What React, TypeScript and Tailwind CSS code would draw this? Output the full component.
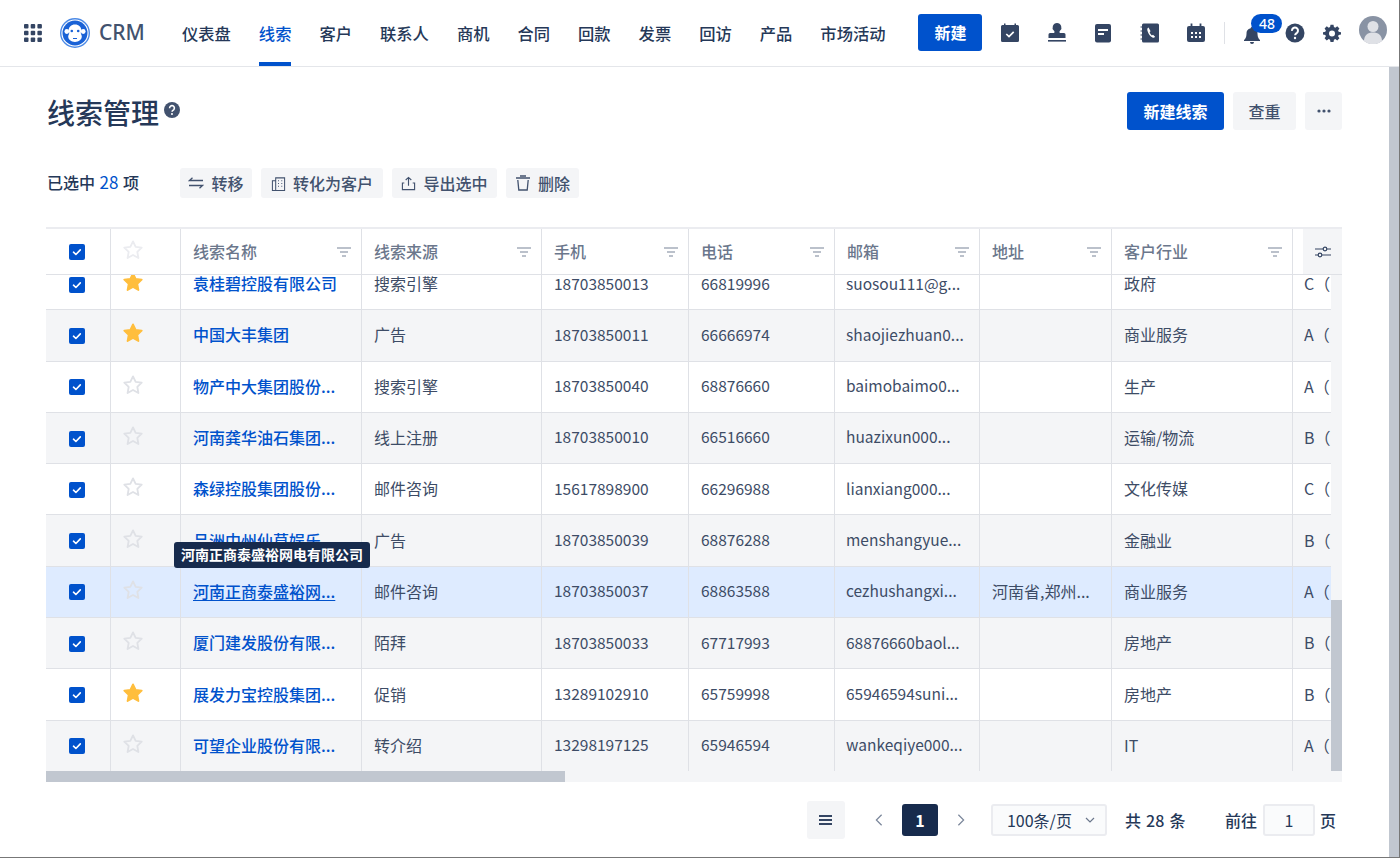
import type { ReactNode } from 'react';

// --- Mock data for the leads table ---
const leads = [
  { name: '袁桂碧控股有限公司', source: '搜索引擎', mobile: '18703850013', phone: '66819996', email: 'suosou111@g...', address: '', industry: '政府', level: 'C（', star: true },
  { name: '中国大丰集团', source: '广告', mobile: '18703850011', phone: '66666974', email: 'shaojiezhuan0...', address: '', industry: '商业服务', level: 'A（', star: true },
  { name: '物产中大集团股份...', source: '搜索引擎', mobile: '18703850040', phone: '68876660', email: 'baimobaimo0...', address: '', industry: '生产', level: 'A（', star: false },
  { name: '河南龚华油石集团...', source: '线上注册', mobile: '18703850010', phone: '66516660', email: 'huazixun000...', address: '', industry: '运输/物流', level: 'B（', star: false },
  { name: '森绿控股集团股份...', source: '邮件咨询', mobile: '15617898900', phone: '66296988', email: 'lianxiang000...', address: '', industry: '文化传媒', level: 'C（', star: false },
  { name: '吕洲中州仙草娱乐...', source: '广告', mobile: '18703850039', phone: '68876288', email: 'menshangyue...', address: '', industry: '金融业', level: 'B（', star: false },
  { name: '河南正商泰盛裕网...', source: '邮件咨询', mobile: '18703850037', phone: '68863588', email: 'cezhushangxi...', address: '河南省,郑州...', industry: '商业服务', level: 'A（', star: false, hovered: true },
  { name: '厦门建发股份有限...', source: '陌拜', mobile: '18703850033', phone: '67717993', email: '68876660baol...', address: '', industry: '房地产', level: 'B（', star: false },
  { name: '展发力宝控股集团...', source: '促销', mobile: '13289102910', phone: '65759998', email: '65946594suni...', address: '', industry: '房地产', level: 'B（', star: true },
  { name: '可望企业股份有限...', source: '转介绍', mobile: '13298197125', phone: '65946594', email: 'wankeqiye000...', address: '', industry: 'IT', level: 'A（', star: false },
];

const navItems = ['仪表盘', '线索', '客户', '联系人', '商机', '合同', '回款', '发票', '回访', '产品', '市场活动'];

const Checkbox = () => (
  <span className="flex h-4 w-4 items-center justify-center rounded-[2px] bg-[#0052cc]">
    <svg viewBox="0 0 16 16" className="h-4 w-4" fill="none" stroke="white" strokeWidth="1.6" strokeLinecap="round" strokeLinejoin="round">
      <path d="M4.5 8.2l2.4 2.3 4.4-4.6" />
    </svg>
  </span>
);

const Star = ({ filled, light }: { filled?: boolean; light?: boolean }) => (
  <svg viewBox="0 0 24 24" className="-mt-1 h-[22px] w-[22px]" fill={filled ? '#ffbe3d' : 'none'} stroke={filled ? '#ffbe3d' : light ? '#ebecf0' : '#dfe1e6'} strokeWidth="2" strokeLinejoin="round">
    <path d="M12 2.6l2.9 6 6.6.9-4.8 4.6 1.2 6.6-5.9-3.2-5.9 3.2 1.2-6.6L2.5 9.500l6.6-.9z" />
  </svg>
);

const FilterIcon = () => (
  <svg viewBox="0 0 14 10" className="h-[10px] w-[14px]" fill="none" stroke="#a5adba" strokeWidth="1.300">
    <path d="M0 1h14M3 5h8M5 9h4" />
  </svg>
);

const ToolButton = ({ icon, className, children }: { icon: ReactNode; className: string; children: ReactNode }) => (
  <button className={`flex h-[30px] items-center justify-center gap-[7px] rounded-[3px] bg-[#f4f5f7] text-[16px] font-medium text-[#42526e] ${className}`}>
    {icon}
    {children}
  </button>
);

const HeaderCell = ({ className, label }: { className: string; label: string }) => (
  <div className={`flex items-center justify-between border-r border-[#dfe1e6] pl-[12px] pr-[10px] text-[16px] font-medium text-[#6b778c] ${className}`}>
    <span className="pb-[2px]">{label}</span>
    <FilterIcon />
  </div>
);

export default function App() {
  return (
    <div className="flex h-[858px] w-[1400px] flex-col overflow-hidden border-r border-b border-[#777] bg-white text-[#42526e] [font-family:'Noto_Sans_CJK_SC','Noto_Sans',sans-serif]">
      {/* --- Top nav --- */}
      <header className="flex h-[67px] shrink-0 items-center border-b border-[#e4e6ea] pl-6">
        <svg viewBox="0 0 18 18" className="h-[18px] w-[18px]" fill="#344563">
          <rect x="0" y="0" width="4.500" height="4.500" rx="1" /><rect x="6.700" y="0" width="4.500" height="4.500" rx="1" /><rect x="13.400" y="0" width="4.500" height="4.500" rx="1" />
          <rect x="0" y="6.700" width="4.500" height="4.500" rx="1" /><rect x="6.700" y="6.700" width="4.500" height="4.500" rx="1" /><rect x="13.400" y="6.700" width="4.500" height="4.500" rx="1" />
          <rect x="0" y="13.400" width="4.500" height="4.500" rx="1" /><rect x="6.700" y="13.400" width="4.500" height="4.500" rx="1" /><rect x="13.400" y="13.400" width="4.500" height="4.500" rx="1" />
        </svg>
        <svg viewBox="0 0 30 30" className="ml-[18px] h-[30px] w-[30px]">
          <circle cx="15" cy="15" r="14.300" fill="#fff" stroke="#4c8ae6" strokeWidth="1.400" />
          <circle cx="15" cy="15" r="12.500" fill="#1a62d6" />
          <circle cx="6.800" cy="13.500" r="2.400" fill="#fff" />
          <circle cx="23.200" cy="13.500" r="2.400" fill="#fff" />
          <path d="M15 6.500c3.900 0 6.300 2.600 6.300 5.500 0 1.200-.5 2-.5 3 0 1.200 1 2.100 1 3.600 0 3.100-3 5.400-6.800 5.400s-6.800-2.300-6.800-5.400c0-1.500 1-2.400 1-3.600 0-1-.5-1.800-.5-3 0-2.900 2.400-5.500 6.300-5.500z" fill="#fff" />
          <circle cx="11.800" cy="13" r="1.300" fill="#1a62d6" />
          <circle cx="18.200" cy="13" r="1.300" fill="#1a62d6" />
          <path d="M13 20.500h4" stroke="#1a62d6" strokeWidth="1" />
        </svg>
        <span className="ml-[9px] w-[45px] text-[21px] font-medium text-[#42526e] [font-family:'Noto_Sans',sans-serif]">CRM</span>
        <nav className="ml-[38px] flex h-full gap-[28px]">
          {navItems.map((item) => (
            <a key={item} className={`flex h-full items-center border-b-4 pt-1 text-[16.300px] font-medium ${item === '线索' ? 'border-[#0052cc] text-[#0052cc]' : 'border-transparent text-[#253858]'}`}>
              {item}
            </a>
          ))}
        </nav>
        <button className="mb-[2px] ml-[33px] h-[37px] w-16 rounded-[3px] bg-[#0052cc] text-[16px] font-bold text-white">新建</button>
        <div className="ml-[17px] flex items-center gap-[24.500px] text-[#344563]">
          <svg viewBox="0 0 22 22" className="h-[22px] w-[22px]" fill="#344563">
            <path d="M2 4.500A1.500 1.500 0 013.500 3H5V1.500h1.500V3h9V1.500H17V3h1.500A1.500 1.500 0 0120 4.500v14a1.500 1.500 0 01-1.500 1.500h-15A1.500 1.500 0 012 18.500z" />
            <path d="M7.300 12l2.700 2.600 4.700-4.800" fill="none" stroke="white" strokeWidth="1.700" />
          </svg>
          <svg viewBox="0 0 22 22" className="h-[22px] w-[22px]" fill="#344563">
            <path d="M11 1a4.500 4.500 0 00-3 7.800c.7.700.6 1.700.1 2.200H4a1.500 1.500 0 00-1.500 1.500V16h17v-3.500A1.500 1.500 0 0018 11h-4.100c-.5-.5-.6-1.500.1-2.200A4.500 4.500 0 0011 1z" />
            <rect x="2" y="18" width="18" height="1.600" />
          </svg>
          <svg viewBox="0 0 22 22" className="h-[22px] w-[22px]" fill="#344563">
            <rect x="3" y="2" width="16" height="18.500" rx="2" />
            <rect x="6" y="7" width="10" height="2" fill="white" />
            <rect x="6" y="11" width="6" height="2" fill="white" />
          </svg>
          <svg viewBox="0 0 22 22" className="h-[22px] w-[22px]" fill="#344563">
            <rect x="3" y="1.500" width="17" height="19" rx="1.500" />
            <path d="M1.500 5h3M1.500 9h3M1.500 13h3M1.500 17h3" stroke="#344563" strokeWidth="1.200" />
            <path d="M9.500 5.500c-1.200.6-1.500 1.900-1 3.500.8 2.900 2.800 5.300 5 6.500 1 .5 2 .2 2.600-.7l-2.100-2.100-1.100.7c-1-.8-1.900-2.100-2.300-3.400l1-.8z" fill="white" />
          </svg>
          <svg viewBox="0 0 22 22" className="h-[22px] w-[22px]" fill="#344563">
            <rect x="2" y="4" width="18" height="16" rx="2" />
            <path d="M6.500 1.500v5M15.500 1.500v5" stroke="#344563" strokeWidth="1.800" />
            <path d="M6 10h2v2H6zM10 10h2v2h-2zM14 10h2v2h-2zM6 14h2v2H6zM10 14h2v2h-2zM14 14h2v2h-2z" fill="white" />
          </svg>
        </div>
        <span className="ml-[17px] h-[22px] w-px bg-[#dfe1e6]" />
        <div className="relative ml-[17px] flex h-[22px] w-5 items-center justify-center">
          <svg viewBox="0 0 20 20" className="mt-1 h-5 w-5" fill="#344563">
            <path d="M10 2a1.300 1.300 0 00-1.300 1.300A5.500 5.500 0 004.500 9c0 3.500-1.500 5-2.500 6v1h16v-1c-1-1-2.500-2.500-2.500-6a5.500 5.500 0 00-4.200-5.700A1.300 1.300 0 0010 2z" />
            <path d="M8 17h4a2 2 0 01-4 0z" />
          </svg>
          <span className="absolute -top-[8px] left-[9px] flex h-[19px] w-[31px] items-center justify-center rounded-full bg-[#0052cc] text-[14px] font-medium leading-none text-white [font-family:'Noto_Sans',sans-serif]">48</span>
        </div>
        <svg viewBox="0 0 20 20" className="ml-[23px] h-5 w-5">
          <circle cx="10" cy="10" r="9.500" fill="#344563" />
          <path d="M7 7.800a3 3 0 115 2c-.9.7-1.900 1.200-1.900 2.400" fill="none" stroke="white" strokeWidth="2" />
          <circle cx="10" cy="15" r="1.200" fill="white" />
        </svg>
        <svg viewBox="0 0 24 24" className="ml-[18px] h-[18px] w-[18px]" fill="#344563">
          <path fillRule="evenodd" d="M10 1h4l.6 3.100 1.800.8L19 3.100 21.900 6l-1.800 2.600.8 1.800L24 11v3l-3.100.6-.8 1.800 1.800 2.600-2.900 2.900-2.600-1.800-1.800.8L14 24h-4l-.6-3.100-1.800-.8L5 21.900 2.100 19l1.800-2.600-.8-1.800L0 14v-3l3.100-.6.800-1.800L2.100 6 5 3.100l2.600 1.800 1.800-.8zM12 8.500a4 4 0 100 8 4 4 0 000-8z" />
        </svg>
        <svg viewBox="0 0 28 28" className="mb-[6px] ml-[18px] h-[28px] w-[28px]">
          <circle cx="14" cy="14" r="14" fill="#8993a4" />
          <circle cx="14" cy="10.500" r="5.500" fill="#dfe1e6" />
          <path d="M5 25c0-6 4-8.500 9-8.500s9 2.500 9 8.500a14 14 0 01-18 0z" fill="#dfe1e6" />
        </svg>
      </header>

      <div className="flex min-h-0 flex-1">
        <main className="flex w-[1389px] flex-col pl-[46px] pr-[47px]">
          {/* --- Title row --- */}
          <div className="flex h-[63px] shrink-0 items-end justify-between">
            <div className="-mb-[2px] flex items-center gap-[5px]">
              <h1 className="pl-px text-[28px] font-medium leading-[40px] text-[#253858]">线索管理</h1>
              <svg viewBox="0 0 20 20" className="mb-[5px] h-4 w-4">
                <circle cx="10" cy="10" r="10" fill="#42526e" />
                <path d="M7 7.800a3 3 0 115 2c-.9.7-1.900 1.200-1.900 2.400" fill="none" stroke="white" strokeWidth="2" />
                <circle cx="10" cy="15" r="1.300" fill="white" />
              </svg>
            </div>
            <div className="flex gap-[9px]">
              <button className="h-[38px] w-[97px] rounded-[3px] bg-[#0052cc] text-[16px] font-bold text-white">新建线索</button>
              <button className="h-[38px] w-[63px] rounded-[3px] bg-[#f4f5f7] text-[16px] font-medium text-[#42526e]">查重</button>
              <button className="flex h-[38px] w-[37px] items-center justify-center rounded-[3px] bg-[#f4f5f7]">
                <svg viewBox="0 0 16 4" className="h-1 w-4" fill="#42526e"><circle cx="3" cy="2" r="1.600" /><circle cx="8" cy="2" r="1.600" /><circle cx="13" cy="2" r="1.600" /></svg>
              </button>
            </div>
          </div>

          {/* --- Selection toolbar --- */}
          <div className="mt-[38px] flex h-[30px] shrink-0 items-center">
            <span className="w-[134px] pl-px pb-[2px] text-[16px] font-medium text-[#253858] [word-spacing:1px]">
              已选中 <span className="text-[17px] font-normal text-[#0052cc]">28</span> 项
            </span>
            <div className="flex gap-[9px]">
              <ToolButton className="w-[72px]" icon={
                <svg viewBox="0 0 16 12" className="h-3 w-4" fill="none" stroke="#42526e" strokeWidth="1.300"><path d="M15 3.500H1.500L4.500 .8M1 8.500h13.500l-3 2.700" /></svg>
              }>转移</ToolButton>
              <ToolButton className="w-[122px]" icon={
                <svg viewBox="0 0 16 18" className="h-[17px] w-[15px]" fill="none" stroke="#42526e" strokeWidth="1.100"><path d="M5 3h9.500v13.500H5zM5 6H1.500v10.500H5M7.500 6h1M11 6h1M7.500 9h1M11 9h1M7.500 12h1M11 12h1" /></svg>
              }>转化为客户</ToolButton>
              <ToolButton className="w-[105px]" icon={
                <svg viewBox="0 0 16 16" className="h-[15px] w-[15px]" fill="none" stroke="#42526e" strokeWidth="1.200"><path d="M8 10.500V1.500M5 4.300l3-2.800 3 2.800M3.500 7.500H1.500v7h13v-7h-2" /></svg>
              }>导出选中</ToolButton>
              <ToolButton className="w-[73px]" icon={
                <svg viewBox="0 0 16 16" className="h-4 w-4" fill="none" stroke="#42526e" strokeWidth="1.300"><path d="M1 3h14M5 1h6M2.800 5l1 10h8.400l1-10" /></svg>
              }>删除</ToolButton>
            </div>
          </div>

          {/* --- Leads table --- */}
          <div className="mt-[29px] flex h-[555px] shrink-0 flex-col border-t-2 border-[#ebecf0]">
            <div className="flex h-[46px] shrink-0 border-b border-[#dfe1e6]">
              <div className="flex w-[65px] items-center border-r border-[#dfe1e6] pl-[23px]"><Checkbox /></div>
              <div className="flex w-[70px] items-center border-r border-[#dfe1e6] pl-[11px]"><Star light /></div>
              <HeaderCell className="w-[181px]" label="线索名称" />
              <HeaderCell className="w-[180px]" label="线索来源" />
              <HeaderCell className="w-[147px]" label="手机" />
              <HeaderCell className="w-[146px]" label="电话" />
              <HeaderCell className="w-[145px]" label="邮箱" />
              <HeaderCell className="w-[132px]" label="地址" />
              <HeaderCell className="w-[181px]" label="客户行业" />
              <div className="w-[10px] bg-white" />
              <div className="flex w-[39px] items-center justify-center bg-[#f4f5f7]">
                <svg viewBox="0 0 16 12" className="h-3 w-4" fill="none" stroke="#344563" strokeWidth="1.200">
                  <path d="M0 3h8M12 3h4M0 9h3M7 9h9" /><circle cx="10" cy="3" r="1.800" /><circle cx="5" cy="9" r="1.800" />
                </svg>
              </div>
            </div>

            <div className="flex min-h-0 flex-1">
              <div className="min-w-0 flex-1 overflow-hidden">
                <div className="-mt-[16px]">
                  {leads.map((lead, i) => (
                    <div key={lead.mobile} className={`flex h-[51.300px] border-b border-[#dfe1e6] text-[16px] text-[#3d4c66] ${lead.hovered ? 'bg-[#deebff]' : i % 2 === 1 ? 'bg-[#f4f5f7]' : 'bg-white'}`}>
                      <div className="flex w-[65px] shrink-0 items-center border-r border-[#dfe1e6] pl-[23px] pt-px"><Checkbox /></div>
                      <div className="flex w-[70px] shrink-0 items-center border-r border-[#dfe1e6] pl-[11px]"><Star filled={lead.star} /></div>
                      <div className="relative flex w-[181px] shrink-0 items-center border-r border-[#dfe1e6] px-[12px] pb-[2px] font-medium text-[#0052cc]">
                        <span className={`whitespace-nowrap ${lead.hovered ? 'underline underline-offset-2' : ''}`}>{lead.name}</span>
                        {lead.hovered && (
                          <span className="absolute -top-[25px] -left-[7px] z-10 flex h-[26px] w-[196px] items-center justify-center rounded-[3px] bg-[#172b4d] text-[14px] font-bold text-white">
                            河南正商泰盛裕网电有限公司
                          </span>
                        )}
                      </div>
                      <div className="flex w-[180px] shrink-0 items-center border-r border-[#dfe1e6] px-[12px] pb-[2px]">{lead.source}</div>
                      <div className="flex w-[147px] shrink-0 items-center border-r border-[#dfe1e6] px-[12px] pb-[2px] text-[15.500px]">{lead.mobile}</div>
                      <div className="flex w-[146px] shrink-0 items-center border-r border-[#dfe1e6] px-[12px] pb-[2px] text-[15.500px]">{lead.phone}</div>
                      <div className="flex w-[145px] shrink-0 items-center border-r border-[#dfe1e6] px-[11px] pb-[2px] text-[15.500px] whitespace-nowrap">{lead.email}</div>
                      <div className="flex w-[132px] shrink-0 items-center border-r border-[#dfe1e6] px-[12px] pb-[2px] whitespace-nowrap">{lead.address}</div>
                      <div className="flex w-[181px] shrink-0 items-center border-r border-[#dfe1e6] px-[12px] pb-[2px]">{lead.industry}</div>
                      <div className="flex w-[38px] shrink-0 items-center overflow-hidden pl-[11px] pb-[2px] whitespace-nowrap">{lead.level}</div>
                    </div>
                  ))}
                </div>
              </div>
              {/* vertical scrollbar */}
              <div className="flex w-[11px] shrink-0 flex-col justify-end bg-[#f4f5f7]">
                <div className="h-[171px] bg-[#c1c7d0]" />
              </div>
            </div>

            {/* horizontal scrollbar */}
            <div className="h-[11px] shrink-0 bg-[#f4f5f7]">
              <div className="h-full w-[519px] bg-[#c1c7d0]" />
            </div>
          </div>

          {/* --- Pagination --- */}
          <div className="mt-[19px] flex h-[38px] shrink-0 items-center justify-end text-[16px] text-[#253858]">
            <button className="flex h-[38px] w-[38px] items-center justify-center rounded-[3px] bg-[#f4f5f7]">
              <svg viewBox="0 0 14 12" className="h-3 w-[14px]" fill="#344563"><rect y="1" width="13" height="2" /><rect y="5" width="13" height="2" /><rect y="9" width="13" height="2" /></svg>
            </button>
            <svg viewBox="0 0 10 16" className="ml-[29px] h-[14px] w-[10px]" fill="none" stroke="#7a869a" strokeWidth="1.400"><path d="M8 2L2 8l6 6" /></svg>
            <span className="ml-[18px] flex h-[32px] w-9 items-center justify-center rounded-[3px] bg-[#172b4d] font-bold text-white">1</span>
            <svg viewBox="0 0 10 16" className="ml-[18px] h-[14px] w-[10px]" fill="none" stroke="#7a869a" strokeWidth="1.400"><path d="M2 2l6 6-6 6" /></svg>
            <div className="ml-[25px] flex h-[32px] w-[116px] items-center justify-between rounded-[3px] border-2 border-[#ebecf0] bg-[#fafbfc] pl-[14px] pr-[10px]">
              <span>100条/页</span>
              <svg viewBox="0 0 10 6" className="h-[6px] w-[10px]" fill="none" stroke="#6b778c" strokeWidth="1.200"><path d="M1 1l4 4 4-4" /></svg>
            </div>
            <span className="ml-[18px] w-[60px] font-medium whitespace-nowrap [word-spacing:1.500px]">共 28 条</span>
            <span className="ml-[40px] font-medium">前往</span>
            <div className="ml-[6px] flex h-[32px] w-[52px] items-center justify-center rounded-[3px] border-2 border-[#ebecf0] bg-[#fafbfc]">1</div>
            <span className="ml-[5px] pr-[6px] font-medium">页</span>
          </div>
        </main>
        {/* page scrollbar */}
        <div className="w-[10px] shrink-0 bg-[#c1c7d0]" />
      </div>
    </div>
  );
}
